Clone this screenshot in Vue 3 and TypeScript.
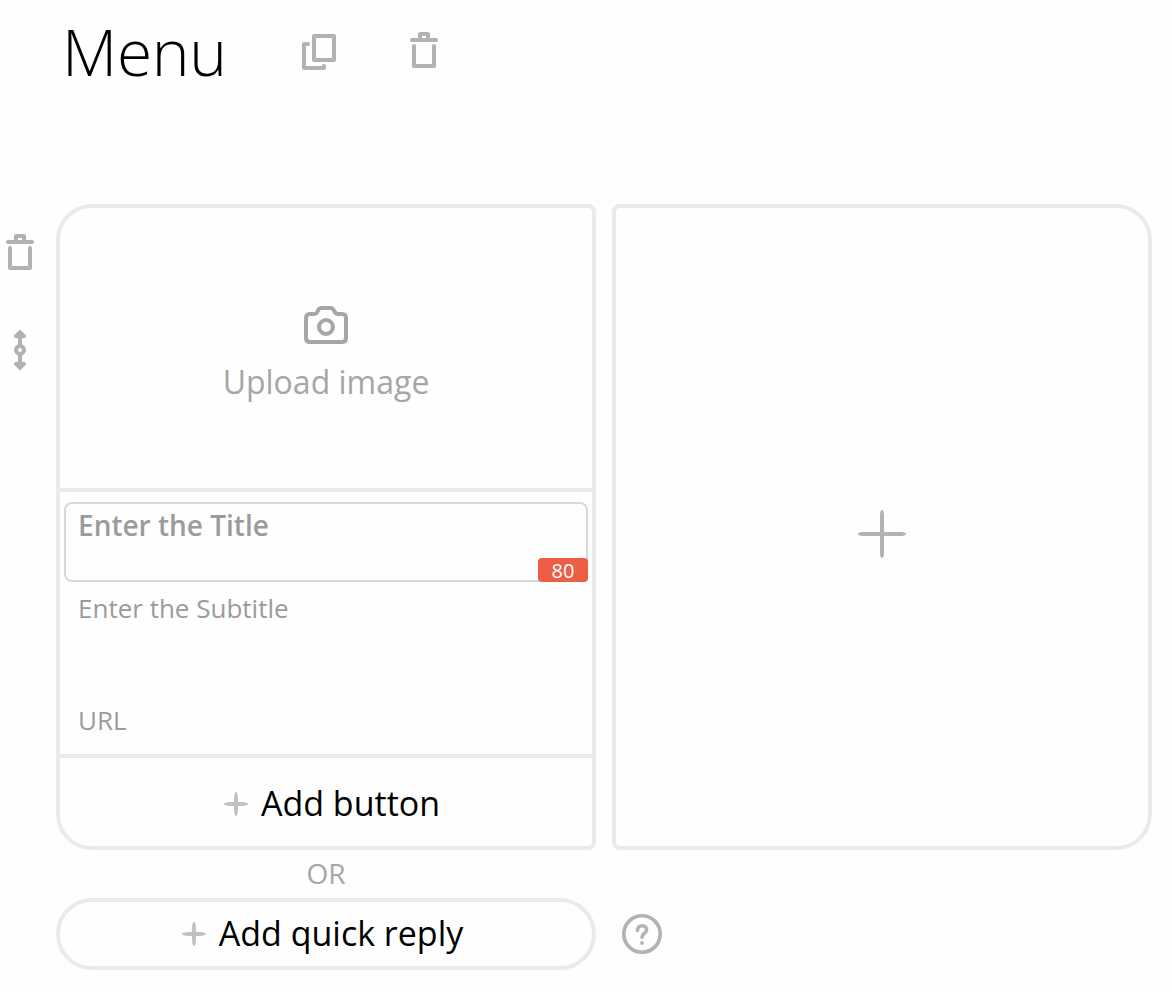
<script setup lang="ts">
import { ref } from 'vue'

const blockName = ref<string>('Menu')
const titleLimit = 80
</script>

<template>
  <main class="page">
    <header class="head">
      <h1 class="name"><span>{{ blockName }}</span></h1>
      <svg class="copy" width="34" height="36" viewBox="302 34 34 36">
        <path class="line" d="M314 36h20v24h-20zM308 44h-4v24h20v-2" />
      </svg>
      <svg class="trash" width="28" height="36" viewBox="0 0 28 36">
        <path class="line" d="M2 8h24M10 7V2h8v5M4 14v20h20V14" />
      </svg>
    </header>

    <section class="body">
      <aside class="tools">
        <svg width="28" height="36" viewBox="0 0 28 36">
          <path class="line" d="M2 8h24M10 7V2h8v5M4 14v20h20V14" />
        </svg>
        <svg class="drag" width="12" height="40" viewBox="0 0 12 40">
          <path class="line" d="M6 4v11M6 25v11" />
          <path class="head-shape" d="M6 1.500l4.500 4.500-.5 .8H2l-.5-.8zM6 38.500l4.500-4.500-.5-.8H2l-.5 .8z" />
          <circle class="line" cx="6" cy="20" r="4" />
        </svg>
      </aside>

      <div class="column">
        <article class="card first">
          <div class="upload">
            <svg width="44" height="38" viewBox="304 306 44 38">
              <path class="line" d="M310 314h4c1.500 0 2.500-.6 3.200-1.900l1.400-2.500c.6-1.100 1.200-1.600 2.500-1.600h9.800c1.300 0 1.900.5 2.500 1.600l1.400 2.500c.7 1.300 1.700 1.900 3.200 1.900h4q4 0 4 4v20q0 4-4 4h-32q-4 0-4-4v-20q0-4 4-4z" />
              <circle class="line" cx="326" cy="327" r="7" />
            </svg>
            <span class="upload-text">Upload image</span>
          </div>
          <div class="fields">
            <div class="title-box">
              <span class="title-text">Enter the Title</span>
              <span class="badge">{{ titleLimit }}</span>
            </div>
            <div class="subtitle">Enter the Subtitle</div>
            <div class="url">URL</div>
          </div>
          <div class="add-button">
            <svg width="24" height="24" viewBox="0 0 24 24">
              <path class="plus" d="M12 0c1.500 0 2 4 2 10 6 0 10 .5 10 2s-4 2-10 2c0 6-.5 10-2 10s-2-4-2-10c-6 0-10-.5-10-2s4-2 10-2c0-6 .5-10 2-10z" />
            </svg>
            <span class="action-text">Add button</span>
          </div>
        </article>
        <div class="or">OR</div>
        <div class="reply-row">
          <div class="reply">
            <svg width="24" height="24" viewBox="0 0 24 24">
              <path class="plus" d="M12 0c1.500 0 2 4 2 10 6 0 10 .5 10 2s-4 2-10 2c0 6-.5 10-2 10s-2-4-2-10c-6 0-10-.5-10-2s4-2 10-2c0-6 .5-10 2-10z" />
            </svg>
            <span class="action-text">Add quick reply</span>
          </div>
          <svg class="help" width="40" height="40" viewBox="0 0 40 40">
            <circle class="line thin" cx="20" cy="20" r="18.200" />
            <path class="line thin" d="M15.500 16.500c0-3 2-4.700 4.700-4.700 2.600 0 4.400 1.600 4.400 4.100 0 3.500-4.600 3.300-4.600 7.300" />
            <circle class="dot" cx="20" cy="29" r="1.900" />
          </svg>
        </div>
      </div>

      <article class="card second">
        <svg width="48" height="48" viewBox="0 0 48 48">
          <path class="plus big" d="M24 0c1.500 0 2 3 2 6v16h16c3 0 6 .5 6 2s-3 2-6 2H26v16c0 3-.5 6-2 6s-2-3-2-6V26H6c-3 0-6-.5-6-2s3-2 6-2h16V6c0-3 .5-6 2-6z" />
        </svg>
      </article>
    </section>
  </main>
</template>

<style>
body {
  background: #fefefe;
}
</style>

<style scoped>
.page {
  box-sizing: border-box;
  width: 1172px;
  height: 992px;
  overflow: hidden;
  background: #fefefe;
  font-family: "Open Sans", "Noto Sans", sans-serif;
  color: #000;
  white-space: nowrap;
}
.page * {
  box-sizing: border-box;
}
svg {
  display: block;
  flex: none;
}
.line {
  fill: none;
  stroke: #b2b2b2;
  stroke-width: 4;
  stroke-linecap: round;
  stroke-linejoin: round;
}
.thin {
  stroke-width: 3.600;
}
.head-shape {
  fill: #b2b2b2;
  stroke: #b2b2b2;
  stroke-width: 3;
  stroke-linejoin: round;
}
.dot {
  fill: #b2b2b2;
}
.plus {
  fill: #c0c0c0;
}
.plus.big {
  fill: #b2b2b2;
}
.head {
  display: flex;
  align-items: flex-start;
  height: 204px;
  padding-left: 62px;
}
.name {
  width: 240px;
  margin: 8px 0 0;
  font-size: 64px;
  line-height: 88px;
  font-weight: 300;
  letter-spacing: -0.3px;
}
.copy {
  margin-top: 34px;
}
.trash {
  margin: 32px 0 0 74px;
}
.body {
  display: flex;
  align-items: flex-start;
}
.tools {
  display: flex;
  flex-direction: column;
  align-items: center;
  gap: 60px;
  width: 40px;
  margin-right: 16px;
  padding-top: 30px;
}
.column {
  width: 540px;
  margin-right: 16px;
}
.card {
  width: 540px;
  height: 646px;
  border: 4px solid #eaeaea;
}
.first {
  border-radius: 36px 8px 8px 36px;
}
.second {
  display: flex;
  align-items: center;
  justify-content: center;
  padding-top: 14px;
  border-radius: 8px 36px 36px 8px;
}
.upload {
  display: flex;
  flex-direction: column;
  align-items: center;
  height: 284px;
  padding-top: 98px;
  border-bottom: 4px solid #eaeaea;
  color: #a6a6a6;
  font-size: 32px;
  line-height: 44px;
}
.upload .line {
  stroke: #a6a6a6;
}
.upload-text {
  margin-top: 16px;
}
.fields {
  height: 266px;
  padding: 10px 4px 0;
  border-bottom: 4px solid #eaeaea;
  color: #9b9b9b;
  font-size: 26px;
  line-height: 36px;
}
.title-box {
  position: relative;
  height: 80px;
  padding: 2px 12px;
  border: 2px solid #d8d8d8;
  border-radius: 8px;
  font-size: 28px;
  font-weight: 600;
  line-height: 38px;
}
.badge {
  position: absolute;
  right: -2px;
  bottom: -2px;
  width: 50px;
  height: 24px;
  border-radius: 4px;
  background: #ec5e45;
  color: #fff;
  font-size: 20px;
  font-weight: 400;
  line-height: 26px;
  text-align: center;
}
.subtitle {
  height: 112px;
  padding: 8px 14px 0;
}
.url {
  padding: 8px 14px 0;
}
.add-button,
.reply {
  display: flex;
  align-items: center;
  justify-content: center;
  gap: 13px;
  font-size: 34px;
  line-height: 46px;
}
.action-text {
  margin-top: -2px;
}
.add-button {
  height: 88px;
  padding: 4px 0 0 12px;
}
.or {
  height: 48px;
  color: #a6a6a6;
  font-size: 28px;
  line-height: 46px;
  text-align: center;
}
.reply-row {
  display: flex;
  align-items: center;
}
.reply {
  flex: none;
  width: 540px;
  height: 72px;
  padding-right: 7px;
  border: 4px solid #eaeaea;
  border-radius: 36px;
}
.help {
  margin-left: 26px;
}
</style>
